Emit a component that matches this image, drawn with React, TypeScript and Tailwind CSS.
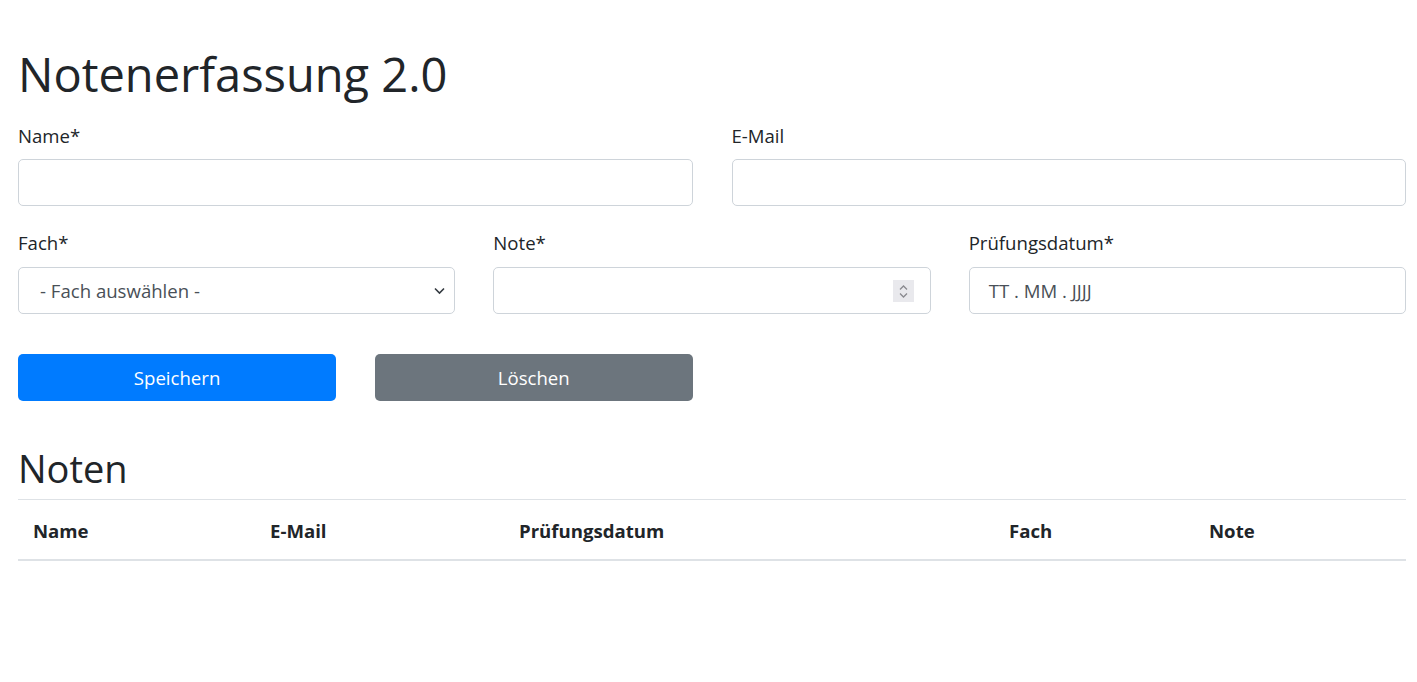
import React from 'react'

function Label({ children }: { children: React.ReactNode }) {
  return <label className="block text-[18.6px] leading-[30px] mb-2">{children}</label>
}

const boxClass =
  'relative h-[47px] w-full rounded-[5px] border border-[#ced4da] bg-white flex items-center text-[18.6px] text-[#495057]'

export default function App() {
  return (
    <div className="min-h-screen bg-white text-[#212529] font-['Open_Sans',sans-serif]">
      <div className="pl-[18px] pr-[11px] pt-[44px]">
        {/* Titel */}
        <h1 className="text-[47px] leading-[60px] font-normal mb-[17px]">Notenerfassung 2.0</h1>

        {/* Name / E-Mail */}
        <div className="grid grid-cols-2 gap-x-[39px] mb-[22px]">
          <div>
            <Label>Name*</Label>
            <input className={boxClass + ' px-4 outline-none'} />
          </div>
          <div>
            <Label>E-Mail</Label>
            <input className={boxClass + ' px-4 outline-none'} />
          </div>
        </div>

        {/* Fach / Note / Datum */}
        <div className="grid grid-cols-3 gap-x-[38px]">
          <div>
            <label className="block text-[18.6px] leading-[30px] mb-[9px]">Fach*</label>
            <div className={boxClass + ' pl-[21px]'}>
              <span>- Fach auswählen -</span>
              <svg
                className="absolute right-[9px] top-1/2 -translate-y-1/2"
                width="11"
                height="7"
                viewBox="0 0 11 7"
                fill="none"
              >
                <path d="M1 1l4.5 4.5L10 1" stroke="#343a40" strokeWidth="1.6" />
              </svg>
            </div>
          </div>
          <div>
            <label className="block text-[18.6px] leading-[30px] mb-[9px]">Note*</label>
            <div className={boxClass}>
              <div className="absolute right-[16px] top-[12px] w-[21px] h-[22px] bg-[#e9e9ed] flex flex-col items-center justify-center gap-[3px]">
                <svg width="9" height="5" viewBox="0 0 9 5" fill="none">
                  <path d="M1 4.5L4.5 1L8 4.5" stroke="#8a8a8f" strokeWidth="1.3" />
                </svg>
                <svg width="9" height="5" viewBox="0 0 9 5" fill="none">
                  <path d="M1 0.5L4.5 4L8 0.5" stroke="#8a8a8f" strokeWidth="1.3" />
                </svg>
              </div>
            </div>
          </div>
          <div>
            <label className="block text-[18.6px] leading-[30px] mb-[9px]">Prüfungsdatum*</label>
            <div className={boxClass + ' pl-[19px]'}>
              <span>TT . MM . JJJJ</span>
            </div>
          </div>
        </div>

        {/* Buttons */}
        <div className="grid grid-cols-4 gap-x-[38.5px] mt-[40px]">
          <button className="h-[47px] rounded-[5px] bg-[#007bff] text-white text-[18.6px] pt-[1px]">Speichern</button>
          <button className="h-[47px] rounded-[5px] bg-[#6c757d] text-white text-[18.6px] pt-[1px]">Löschen</button>
        </div>

        {/* Tabelle */}
        <h2 className="text-[38px] leading-[48px] font-normal mt-[43px] mb-[7px]">Noten</h2>
        <table className="w-full table-fixed border-collapse text-[18.6px]">
          <colgroup>
            <col className="w-[237px]" />
            <col className="w-[249px]" />
            <col className="w-[490px]" />
            <col className="w-[200px]" />
            <col />
          </colgroup>
          <thead>
            <tr className="border-t border-[#dee2e6] border-b-2">
              <th className="text-left font-bold leading-[30px] pt-[16px] pb-[13px] px-[15px]">Name</th>
              <th className="text-left font-bold leading-[30px] pt-[16px] pb-[13px] px-[15px]">E-Mail</th>
              <th className="text-left font-bold leading-[30px] pt-[16px] pb-[13px] px-[15px]">Prüfungsdatum</th>
              <th className="text-left font-bold leading-[30px] pt-[16px] pb-[13px] px-[15px]">Fach</th>
              <th className="text-left font-bold leading-[30px] pt-[16px] pb-[13px] px-[15px]">Note</th>
            </tr>
          </thead>
          <tbody></tbody>
        </table>
      </div>
    </div>
  )
}
